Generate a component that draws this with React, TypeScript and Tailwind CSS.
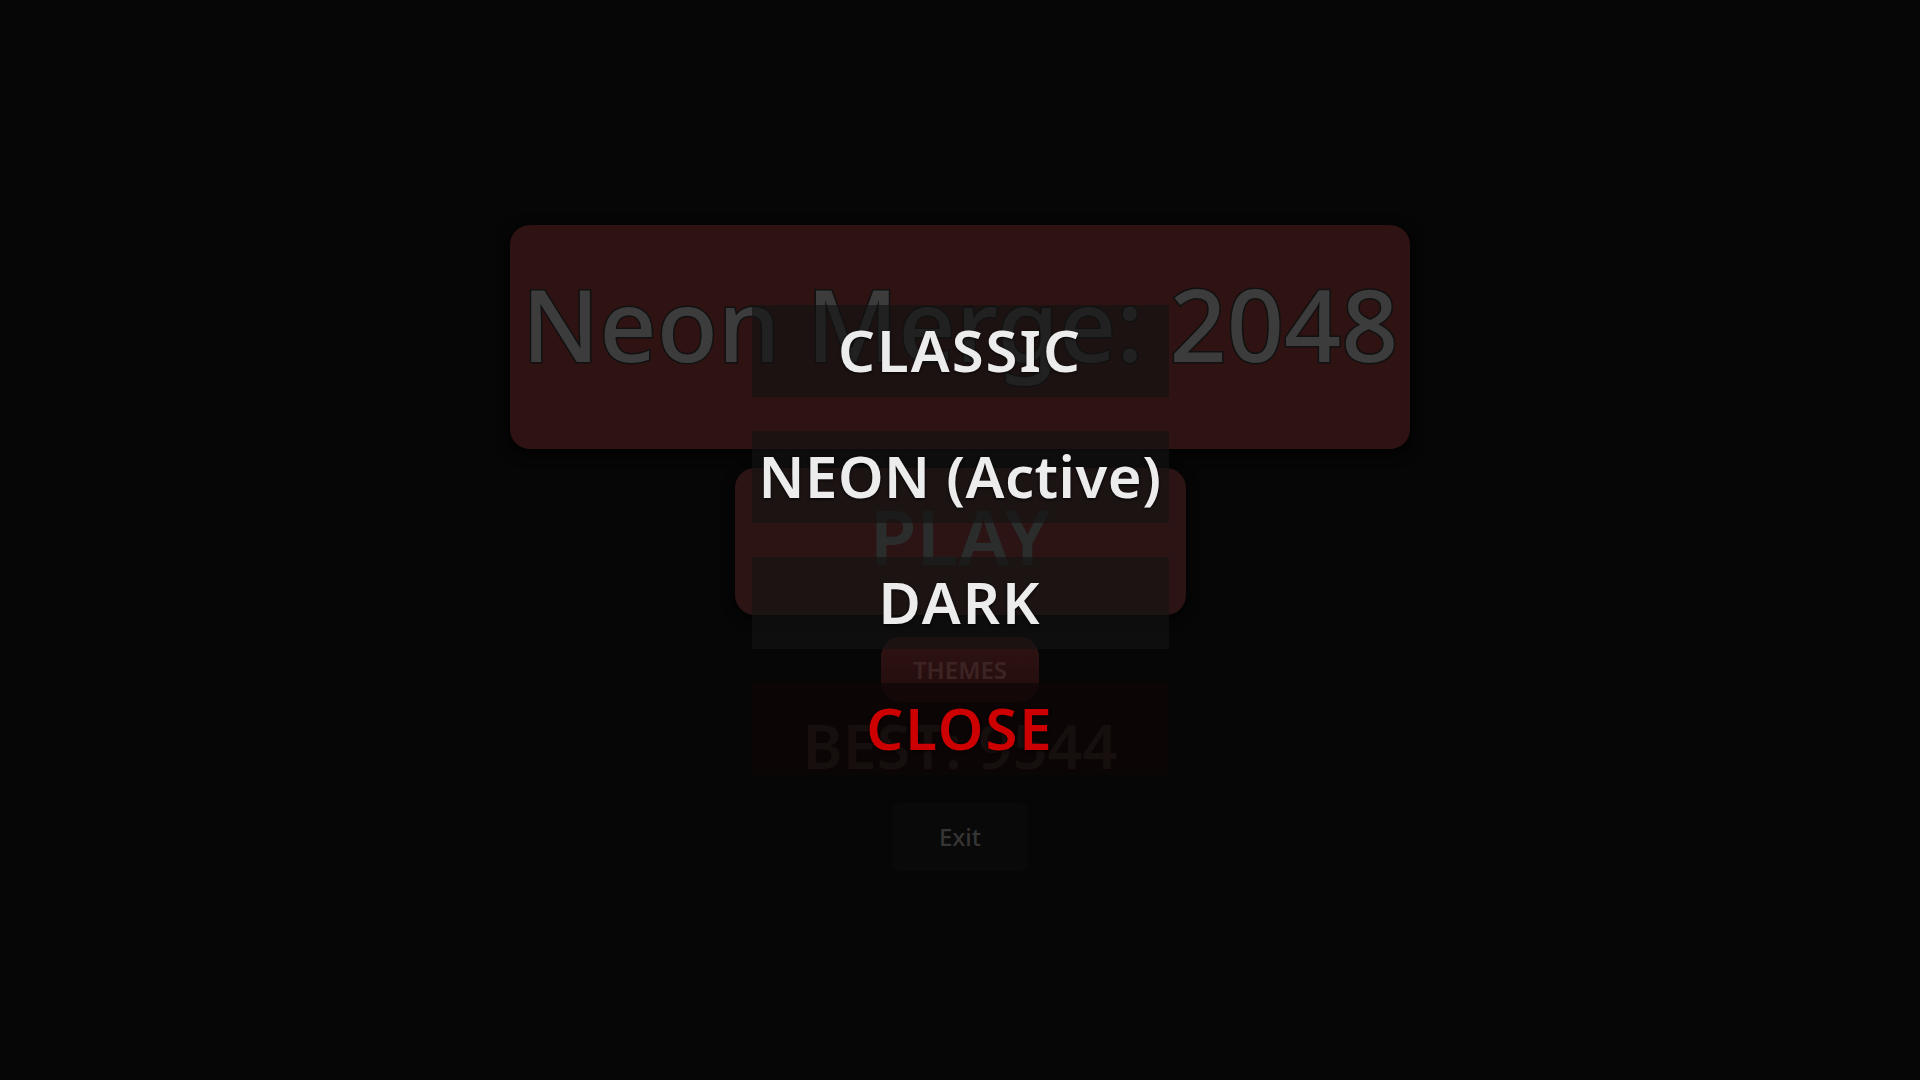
import React from "react";

const menuFont = { fontFamily: '"Noto Sans", "Open Sans", sans-serif' };

export default function App() {
  const items = [
    { label: "CLASSIC", cls: "text-[#ececec] tracking-[2px]", box: "bg-[rgba(20,18,18,0.65)]" },
    { label: "NEON (Active)", cls: "text-[#ececec] tracking-[0.5px]", box: "bg-[rgba(20,18,18,0.65)]" },
    { label: "DARK", cls: "text-[#ececec] tracking-[2px]", box: "bg-[rgba(20,18,18,0.65)]" },
    { label: "CLOSE", cls: "text-[#cc0000] tracking-[2px]", box: "bg-[rgba(14,6,6,0.7)]" },
  ];
  return (
    <div
      className="relative h-screen w-full overflow-hidden bg-[#060606]"
      style={menuFont}
    >
      {/* underlying menu screen */}
      <div className="flex flex-col items-center pt-[225px]">
        <div className="flex h-[224px] w-[900px] justify-center rounded-[20px] bg-[#2e1312] pt-[48px] shadow-[0_4px_14px_rgba(0,0,0,0.9)]">
          <h1 className="text-[100px] font-medium leading-none text-[#3c3c3c] [-webkit-text-stroke:3px_#111] [paint-order:stroke_fill]">
            Neon Merge: 2048
          </h1>
        </div>
        <button className="mt-[19px] flex h-[147px] w-[451px] items-center justify-center rounded-[20px] bg-[#2c1414] pb-[12px] shadow-[0_4px_12px_rgba(0,0,0,0.8)]">
          <span className="text-[76px] font-semibold leading-none text-[#2b2d2d]">PLAY</span>
        </button>
        <button className="mt-[22px] flex h-[65px] w-[158px] items-center justify-center rounded-[20px] bg-gradient-to-b from-[#301313] to-[#220c0c]">
          <span className="text-[24px] font-semibold leading-none text-[#3d2424]">THEMES</span>
        </button>
        <div className="mt-[13px] text-[61px] font-semibold leading-none text-[#2c2222]">
          BEST: 9544
        </div>
        <button className="mt-[27px] flex h-[68px] w-[136px] items-center justify-center rounded-[6px] bg-[#090909]">
          <span className="text-[24px] font-medium leading-none text-[#353535]">Exit</span>
        </button>
      </div>

      {/* themes overlay */}
      <div className="absolute inset-0 flex flex-col items-center gap-[34px] pt-[305px]">
        {items.map((it) => (
          <div
            key={it.label}
            className={`flex h-[92px] w-[417px] items-center justify-center pb-[2px] ${it.box}`}
          >
            <span
              className={`text-[58px] font-semibold leading-none ${it.cls} [text-shadow:0_1px_3px_rgba(0,0,0,0.8)]`}
            >
              {it.label}
            </span>
          </div>
        ))}
      </div>
    </div>
  );
}
